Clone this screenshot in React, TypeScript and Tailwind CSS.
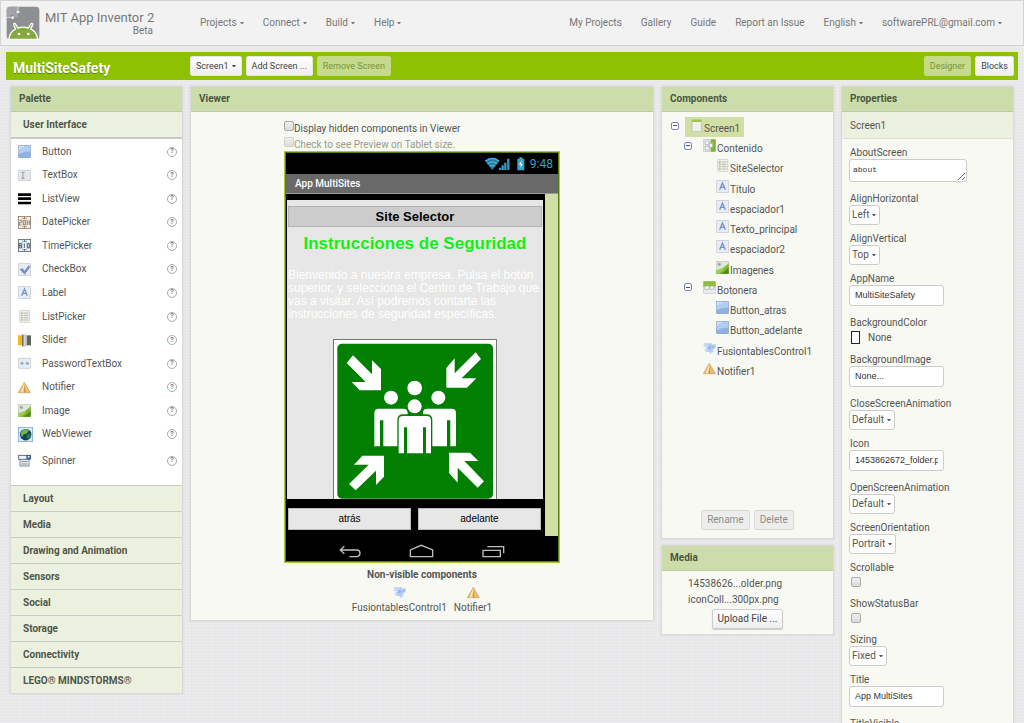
import type { ReactNode } from "react";

type IconName =
  | "button" | "textbox" | "listview" | "date" | "time" | "checkbox" | "label" | "listpicker"
  | "slider" | "password" | "notifier" | "image" | "web" | "spinner" | "screen" | "vertical"
  | "horizontal" | "fusion";

const frame = <rect x="1" y="1" width="37" height="37" rx="3" fill="#e9edf3" stroke="#b9bec8" strokeWidth="2" />;

const drawings: Record<IconName, ReactNode> = {
  button: (
    <>
      <rect x="1" y="1" width="37" height="37" rx="3" fill="#8fb2e2" stroke="#8599bd" strokeWidth="2" />
      <path d="M2 2h35v18Q20 18 2 28Z" fill="#b4cdf0" />
      <path d="M5 5h12M5 5v7" stroke="#e3eefc" strokeWidth="3" />
    </>
  ),
  textbox: (
    <>
      <rect x="1" y="4" width="37" height="31" rx="3" fill="#e4e6ea" stroke="#bfc3ca" strokeWidth="2" />
      <path d="M10 10h10M15 10v18M10 28h10" stroke="#8e929a" strokeWidth="2.5" fill="none" />
    </>
  ),
  listview: <path d="M0 4h39v8H0zM0 16h39v8H0zM0 29h39v8H0z" fill="#000" />,
  date: (
    <>
      <rect x="1" y="1" width="37" height="37" fill="#f6efe6" stroke="#8b8377" strokeWidth="3" />
      <path d="M13 1v37M26 1v37" stroke="#a59e92" strokeWidth="1.5" />
      <path d="M15 9l4.500-7 4.500 7zM15 30l4.500 7 4.500-7z" fill="#c86f28" />
      <path d="M4 13h6v7H4v7h6M17 13v14h5V13zM29 13v14M34 13v14" stroke="#7d7368" strokeWidth="2.500" fill="none" />
    </>
  ),
  time: (
    <>
      <rect x="1" y="1" width="37" height="37" fill="#f1f5f8" stroke="#5d6872" strokeWidth="3" />
      <path d="M13 1v37M26 1v37" stroke="#8d979f" strokeWidth="1.5" />
      <path d="M15 9l4.500-7 4.500 7zM15 30l4.500 7 4.500-7z" fill="#3b7ca5" />
      <path d="M4 13h6v14H4zM4 20h6M19 13v14M29 13h5v14h-5z" stroke="#3c4650" strokeWidth="2.500" fill="none" />
    </>
  ),
  checkbox: (
    <>
      {frame}
      <path d="M5 19l9-3 5 8 13-17 5 4-17 24Z" fill="#6d8fc4" />
    </>
  ),
  label: (
    <>
      {frame}
      <path d="M11 29l8.500-20L28 29M14.500 22h10" stroke="#6f95cf" strokeWidth="4" fill="none" />
    </>
  ),
  listpicker: (
    <>
      <rect x="5" y="1" width="30" height="37" rx="3" fill="#eef0ea" stroke="#c1c4bd" strokeWidth="2" />
      <path d="M9 9h5M9 16h5M9 23h5M9 30h5" stroke="#a5b86c" strokeWidth="4" />
      <path d="M17 9h14M17 16h14M17 23h14M17 30h14" stroke="#b5b9b9" strokeWidth="3" />
    </>
  ),
  slider: (
    <>
      <path d="M0 4h13v30H0z" fill="#f2b818" />
      <path d="M26 4h13v30H26z" fill="#5f6060" />
      <path d="M12 2h14v35H12z" fill="#b9b9b9" />
      <path d="M12 2h4v35h-4z" fill="#707070" />
      <path d="M19 2h3v35h-3z" fill="#e2e2e2" />
    </>
  ),
  password: (
    <>
      <rect x="1" y="4" width="37" height="30" rx="3" fill="#e8edf3" stroke="#b9bec8" strokeWidth="2" />
      <path d="M7 19h10M12 14v10M23 19h10M28 14v10M8.500 15.500l7 7M15.500 15.500l-7 7M24.500 15.500l7 7M31.500 15.500l-7 7" stroke="#7d97bb" strokeWidth="2" />
    </>
  ),
  notifier: (
    <>
      <path d="M19 4L37 35H1Z" fill="#eebd6b" stroke="#c99a5a" strokeWidth="2" strokeLinejoin="round" />
      <path d="M19 5L8 34h9Z" fill="#fbe4b6" />
      <path d="M19 12l2 22h-4z" fill="#b78443" />
    </>
  ),
  image: (
    <>
      <rect x="1" y="1" width="37" height="37" rx="2" fill="#dfe6da" stroke="#b3bcaa" strokeWidth="2" />
      <circle cx="10" cy="10" r="5" fill="#a4aa9f" />
      <path d="M1 28Q20 26 38 7v31H1Z" fill="#7db52d" />
      <path d="M1 38V28Q14 27 24 20q-3 14-23 18Z" fill="#a2cf52" />
      <path d="M14 38q17-7 24-20v20Z" fill="#4d8a1d" />
    </>
  ),
  web: (
    <>
      <rect x="1" y="1" width="37" height="37" fill="#dbe9fb" stroke="#7aa6dd" strokeWidth="2" />
      <circle cx="20" cy="20" r="15" fill="#17415c" />
      <path d="M8 13Q14 4 22 6l6 4-5 7-8 2-4 7q-6-5-3-13Z" fill="#6cb944" />
      <path d="M23 20l10-3q3 9-6 15-7-4-4-12Z" fill="#287f43" />
    </>
  ),
  spinner: (
    <>
      <rect x="2" y="4" width="33" height="12" fill="#eef1f5" stroke="#47566c" strokeWidth="2.500" />
      <path d="M25 3h14v13H25z" fill="#3b5d94" />
      <path d="M28 7h8l-4 6z" fill="#fff" />
      <rect x="6" y="17" width="27" height="19" fill="#f7f8fa" stroke="#667285" strokeWidth="2.500" />
      <path d="M10 23h19M10 30h19" stroke="#667285" strokeWidth="2.500" />
    </>
  ),
  screen: (
    <>
      <rect x="6" y="1" width="28" height="37" rx="3" fill="#f0f1ec" stroke="#b4b8ab" strokeWidth="2" />
      <path d="M6 2h28v7H6z" fill="#9dc24e" />
    </>
  ),
  vertical: (
    <>
      {frame}
      <path d="M23 1h12q3 0 3 3v31q0 3-3 3H23Z" fill="#86b534" />
      <path d="M6 6h13v11H6zM6 22h13v11H6zM18 13h11v12H18z" fill="#f5f5f3" stroke="#a7aba3" strokeWidth="2" />
    </>
  ),
  horizontal: (
    <>
      {frame}
      <path d="M1 17V4q0-3 3-3h31q3 0 3 3v13H1Z" fill="#8dbb3d" />
      <path d="M6 15h12v10H6zM21 15h12v10H21z" fill="#f8f8f6" stroke="#a7aba3" strokeWidth="2" />
    </>
  ),
  fusion: (
    <>
      <path d="M2 3h16v12H2zM8 16h14v13H8z" fill="#c9daf4" />
      <path d="M14 7l11-4 3 5 10-2v12l-8 4 1 7-9 6-5-7-8 2-2-8 8-6z" fill="#b3ccf1" />
      <path d="M18 12l7 3-3 7-7-2zM28 12l7 1-5 6z" fill="#8fb1e6" />
      <path d="M3 22h7v6H3zM24 29h7v6h-7z" fill="#dde8f8" />
    </>
  ),
};

function Icon({ name, big = false }: { name: IconName; big?: boolean }) {
  return (
    <svg viewBox="0 0 39 39" className={big ? "h-[15px] w-[15px] shrink-0" : "h-[13px] w-[13px] shrink-0"} aria-hidden="true">
      {drawings[name]}
    </svg>
  );
}

function Caret() {
  return (
    <svg viewBox="0 0 4 2" className="h-[2px] w-[4px] shrink-0" aria-hidden="true">
      <path d="M0 0h4L2.500 2h-1Z" fill="currentColor" />
    </svg>
  );
}

function MenuButton({ children }: { children: ReactNode }) {
  return (
    <button type="button" className="flex items-center gap-[3px] whitespace-nowrap">
      {children}
      <Caret />
    </button>
  );
}

function Logo() {
  return (
    <svg viewBox="18 18 102 102" className="h-[34px] w-[34px] shrink-0" aria-hidden="true">
      <rect x="20" y="20" width="98" height="98" rx="10" fill="#8d8f92" />
      <path d="M20 50V30q0-10 10-10h24v12h-8v8h8v12H40v-8h-8v8Z" fill="#a3a5a8" />
      <path d="M54 20v16M40 53H20M54 36h8" stroke="#f3f3f3" strokeWidth="2" fill="none" />
      <circle cx="53" cy="36" r="4" fill="#f3f3f3" />
      <circle cx="38" cy="53" r="4" fill="#f3f3f3" />
      <path d="M27 118q1-22 20-31l-6-12q-1-5 4-5l9 14q15-5 31 0l9-14q6 0 4 5l-6 12q19 9 21 31Z" fill="#84a93f" stroke="#fff" strokeWidth="4" strokeLinejoin="round" />
      <circle cx="57" cy="102" r="4" fill="#fff" />
      <circle cx="85" cy="102" r="4" fill="#fff" />
    </svg>
  );
}

function Panel({ title, className, children }: { title: string; className: string; children: ReactNode }) {
  return (
    <section className={`border border-[#d9dad7] bg-[#f7f9f2] shadow-[0_0_2px_#cfcfcf] ${className}`}>
      <h2 className="flex h-[25px] items-center border-b border-[#bccba3] bg-[#ccddab] pl-2 font-bold text-[#4b5641]">{title}</h2>
      {children}
    </section>
  );
}

const paletteItems: [string, IconName][] = [
  ["Button", "button"], ["TextBox", "textbox"], ["ListView", "listview"], ["DatePicker", "date"],
  ["TimePicker", "time"], ["CheckBox", "checkbox"], ["Label", "label"], ["ListPicker", "listpicker"],
  ["Slider", "slider"], ["PasswordTextBox", "password"], ["Notifier", "notifier"], ["Image", "image"],
  ["WebViewer", "web"],
];

const categories = ["Layout", "Media", "Drawing and Animation", "Sensors", "Social", "Storage", "Connectivity", "LEGO® MINDSTORMS®"];

function PaletteItem({ name, icon }: { name: string; icon: IconName }) {
  return (
    <li className="flex items-center pr-[5px] pl-[7px]">
      <span className="flex w-6 items-center">
        <Icon name={icon} big={icon === "web"} />
      </span>
      <span className="grow">{name}</span>
      <button type="button" aria-label={`Help for ${name}`} className="flex h-[10px] w-[10px] items-center justify-center rounded-full border border-[#aaa] text-[7px] leading-none font-bold text-[#777]">
        ?
      </button>
    </li>
  );
}

function Palette() {
  return (
    <Panel title="Palette" className="w-[173px] shrink-0">
      <button type="button" className="flex h-[27px] w-full items-center border-b-2 border-[#c9cbc8] bg-[#ecf1df] pt-px pl-3 font-bold text-[#4f564a]">
        User Interface
      </button>
      <div className="bg-white pt-px pb-[10px]">
        <ul className="grid h-[306px] auto-rows-fr">
          {paletteItems.map(([name, icon]) => (
            <PaletteItem key={name} name={name} icon={icon} />
          ))}
        </ul>
        <ul className="grid h-[29px] content-center">
          <PaletteItem name="Spinner" icon="spinner" />
        </ul>
      </div>
      {categories.map((c) => (
        <button key={c} type="button" className="flex h-[26px] w-full items-center border-t border-[#c9ccc4] bg-[#ecf1df] pl-3 font-bold text-[#4f564a]">
          {c}
        </button>
      ))}
    </Panel>
  );
}

function Check({ id, disabled = false }: { id: string; disabled?: boolean }) {
  return (
    <input
      id={id}
      type="checkbox"
      disabled={disabled}
      className="h-[10px] w-[10px] shrink-0 appearance-none rounded-[2px] border border-[#a9a9a9] bg-linear-to-b from-[#efefef] to-[#dcdcdc] disabled:border-[#cfcfcf]"
    />
  );
}

function StatusIcons() {
  return (
    <svg viewBox="624 136 126 42" className="h-[14px] w-[42px]" aria-hidden="true" fill="none" stroke="#3497bd">
      <path d="M626 147Q649 129 671 147L649 175Z" fill="#2b7d9f" stroke="none" />
      <path d="M629 148Q649 132 669 148M635 156Q649 145 663 156M641 164Q649 158 657 164" strokeWidth="4" stroke="#4bb0d6" />
      <path d="M672 175v-7M680 175v-14M688 175v-22M697 175v-34" strokeWidth="7" />
      <path d="M724 141h6v-4h9v4h6v35h-21z" fill="#3aa0c6" stroke="none" />
      <path d="M737 146l-8 13h6l-3 11 9-14h-6z" fill="#fff" stroke="none" />
    </svg>
  );
}

function AssemblySign() {
  return (
    <svg viewBox="174 28 492 480" className="mx-auto h-[160px] w-[164px]" role="img" aria-label="Assembly point">
      <rect x="175.500" y="29.500" width="489" height="490" fill="#fff" stroke="#777" strokeWidth="3" />
      <rect x="187" y="42" width="467" height="465" rx="14" fill="#007f00" />
      <g fill="#fff">
        <path d="M234 77l57 57V92l27 26v64h-64l-24-25h42l-57-57z" />
        <path d="M602 68l-63 63V86l-25 29v59h62l28-28h-44l58-58z" />
        <path d="M242 482l61-59v43l24-25v-63h-65l-25 27h44l-59 58z" />
        <path d="M608 474l-60-60v45l-26-29v-61h63l25 25h-42l59 61z" />
        <circle cx="419" cy="175" r="22" />
        <circle cx="348" cy="204" r="21" />
        <circle cx="490" cy="204" r="21" />
        <path d="M298 250q0-13 13-13h74q13 0 13 13v100h-73v-78h-10v78h-17z" />
        <path d="M444 250q0-13 13-13h73q13 0 13 13v100h-17v-78h-10v78h-72z" />
      </g>
      <circle cx="419" cy="230" r="24" fill="#007f00" />
      <circle cx="419" cy="230" r="21" fill="#fff" />
      <path d="M367 375V271q0-17 17-17h71q17 0 17 17v104z" fill="#007f00" />
      <path d="M371 371V272q0-13 13-13h71q13 0 13 13v99h-15v-78h-9v78h-48v-78h-9v78z" fill="#fff" />
    </svg>
  );
}

function Phone() {
  return (
    <div className="w-[276px] border border-[#aacb2b] font-['Liberation_Sans',sans-serif]">
      <div className="border border-[#5b7a0c] bg-black">
        <div className="flex h-[21px] items-center justify-end gap-[4px] pr-[5px] font-['Roboto',sans-serif] text-[12px] text-[#3aa0c6]">
          <StatusIcons />
          9:48
        </div>
        <div className="flex h-5 items-center border-b border-[#9a9a9a] bg-[#696969] pl-[9px] font-['Roboto',sans-serif] font-medium text-white">
          App MultiSites
        </div>
        <div className="flex bg-[#d2dfa4]">
          <div className="w-[259px] bg-black px-px pt-[6px] pb-[6px]">
            <div className="mr-px h-[299px] overflow-hidden bg-[#e7e7e7] px-px pt-[6px]">
              <button type="button" className="block h-[21px] w-full border border-[#b3b3b3] bg-[#ccc] text-[13px] leading-4 font-bold text-black">
                Site Selector
              </button>
              <h3 className="mt-[7px] text-center text-[17px] leading-[20px] font-bold text-[#12f012]">Instrucciones de Seguridad</h3>
              <p className="mt-[15px] h-[70px] text-[12px] leading-[13px] text-white">
                Bienvenido a nuestra empresa. Pulsa el botón superior, y selecciona el Centro de Trabajo que vas a visitar. Así podremos contarte las instrucciones de seguridad específicas.
              </p>
              <AssemblySign />
            </div>
            <div className="flex gap-[7px] pt-[9px] pr-[3px] pl-px">
              <button type="button" className="h-[22px] flex-1 border border-[#bbb] bg-[#e7e7e7] text-black">atrás</button>
              <button type="button" className="h-[22px] flex-1 border border-[#bbb] bg-[#e7e7e7] text-black">adelante</button>
            </div>
          </div>
        </div>
        <div className="flex h-[25px] items-center justify-center gap-12 pt-1">
          <svg viewBox="194 640 66 42" className="h-[14px] w-[22px]" fill="none" stroke="#bdbdbd" strokeWidth="4" aria-hidden="true">
            <path d="M210 647l-12 11 12 11M199 658h50q8 1 8 10t-9 10h-23" />
          </svg>
          <svg viewBox="405 640 75 42" className="h-[14px] w-[25px]" fill="none" stroke="#bdbdbd" strokeWidth="4" aria-hidden="true">
            <path d="M409 678v-20l33-14 34 14v20z" />
          </svg>
          <svg viewBox="624 640 69 42" className="h-[14px] w-[23px]" fill="none" stroke="#bdbdbd" strokeWidth="4" aria-hidden="true">
            <path d="M627 659h52v19h-52zM640 648h49v20" />
          </svg>
        </div>
      </div>
    </div>
  );
}

function Viewer() {
  return (
    <Panel title="Viewer" className="min-w-[300px] grow">
      <div className="flex flex-col items-center pt-[9px] pb-[6px]">
        <div>
          <div className="flex h-4">
            <Check id="hidden-components" />
            <label htmlFor="hidden-components" className="pt-[2px]">Display hidden components in Viewer</label>
          </div>
          <div className="flex h-[14px]">
            <Check id="tablet-preview" disabled />
            <label htmlFor="tablet-preview" className="pt-[2px] text-[#999]">Check to see Preview on Tablet size.</label>
          </div>
          <Phone />
        </div>
        <h3 className="mt-[6px] font-bold">Non-visible components</h3>
        <div className="mt-[5px] flex gap-[7px]">
          <div className="flex flex-col items-center gap-[3px]">
            <Icon name="fusion" />
            FusiontablesControl1
          </div>
          <div className="flex flex-col items-center gap-[3px]">
            <Icon name="notifier" />
            Notifier1
          </div>
        </div>
      </div>
    </Panel>
  );
}

const tree: { name: string; icon: IconName; depth: 0 | 1 | 2; open?: boolean }[] = [
  { name: "Screen1", icon: "screen", depth: 0, open: true },
  { name: "Contenido", icon: "vertical", depth: 1, open: true },
  { name: "SiteSelector", icon: "listpicker", depth: 2 },
  { name: "Titulo", icon: "label", depth: 2 },
  { name: "espaciador1", icon: "label", depth: 2 },
  { name: "Texto_principal", icon: "label", depth: 2 },
  { name: "espaciador2", icon: "label", depth: 2 },
  { name: "Imagenes", icon: "image", depth: 2 },
  { name: "Botonera", icon: "horizontal", depth: 1, open: true },
  { name: "Button_atras", icon: "button", depth: 2 },
  { name: "Button_adelante", icon: "button", depth: 2 },
  { name: "FusiontablesControl1", icon: "fusion", depth: 1 },
  { name: "Notifier1", icon: "notifier", depth: 1 },
];

const indents = ["pl-[9px]", "pl-[22px]", "pl-[35px]"];

function Tree() {
  return (
    <ul className="mt-[5px] grid h-[263px] auto-rows-fr">
      {tree.map((n) => (
        <li key={n.name} className={`flex items-center ${indents[n.depth]}`}>
          <span className="flex w-[14px] shrink-0 pb-[3px]">
            {n.open && (
              <button type="button" aria-label={`Collapse ${n.name}`} className="flex h-2 w-2 items-center justify-center rounded-[2px] border border-[#7b83c4] bg-white">
                <span className="h-px w-1 bg-[#3d48a8]" />
              </button>
            )}
          </span>
          <span className={n.depth === 0 ? "flex h-full items-start bg-[#d2dfa4] pt-[2px] pr-1 pl-[5px]" : "flex h-full items-start pt-[2px] pl-[5px]"}>
            <Icon name={n.icon} />
            <span className="pt-1 pl-px">{n.name}</span>
          </span>
        </li>
      ))}
    </ul>
  );
}

const buttonBase = "h-5 rounded-[2px] border px-[5px] whitespace-nowrap";

function Components() {
  return (
    <div className="flex w-[173px] shrink-0 flex-col gap-[6px]">
      <Panel title="Components" className="h-[453px]">
        <div className="flex h-[426px] flex-col justify-between pb-2">
          <Tree />
          <div className="flex justify-center gap-1">
            <button type="button" disabled className={`${buttonBase} border-[#d9d9d9] bg-[#ededeb] text-[#8d8d8d]`}>Rename</button>
            <button type="button" disabled className={`${buttonBase} border-[#d9d9d9] bg-[#ededeb] text-[#8d8d8d]`}>Delete</button>
          </div>
        </div>
      </Panel>
      <Panel title="Media" className="">
        <ul className="pt-[5px] pl-[26px] leading-4">
          <li>14538626...older.png</li>
          <li>iconColl...300px.png</li>
        </ul>
        <div className="flex justify-center pt-px pb-[5px]">
          <button type="button" className={`${buttonBase} border-[#ccc] bg-linear-to-b from-white to-[#eee] text-[#444] shadow-[0_1px_1px_#ccc]`}>
            Upload File ...
          </button>
        </div>
      </Panel>
    </div>
  );
}

function Field({ label, className, children }: { label: string; className: string; children: ReactNode }) {
  return (
    <div className={`flex flex-col items-start ${className}`}>
      <label htmlFor={label} className="pl-px leading-[13px]">{label}</label>
      {children}
    </div>
  );
}

function SelectField({ label, value }: { label: string; value: string }) {
  return (
    <Field label={label} className="h-10">
      <div className="flex h-5 items-center rounded-[3px] border border-[#ccc] bg-white pr-[3px] pl-[2px]">
        <select id={label} defaultValue={value} className="field-sizing-content appearance-none pr-[3px] leading-3 outline-none">
          <option>{value}</option>
        </select>
        <Caret />
      </div>
    </Field>
  );
}

function TextField({ label, value }: { label: string; value: string }) {
  return (
    <Field label={label} className="h-[44px]">
      <input
        id={label}
        type="text"
        defaultValue={value}
        className="h-[21px] w-[95px] rounded-[3px] border border-[#ccc] bg-white px-[5px] pb-px font-['Liberation_Sans',sans-serif] text-[9px] text-[#333]"
      />
    </Field>
  );
}

function CheckField({ label }: { label: string }) {
  return (
    <Field label={label} className="h-9">
      <span className="flex pt-[3px] pl-[2px]">
        <Check id={label} />
      </span>
    </Field>
  );
}

function Properties() {
  return (
    <Panel title="Properties" className="w-[173px] shrink-0">
      <div className="flex h-[27px] items-center border-b border-[#dde1d3] bg-[#ecf1df] pt-px pl-2">Screen1</div>
      <form className="pt-[7px] pl-[7px]">
        <Field label="AboutScreen" className="h-[46px]">
          <textarea
            id="AboutScreen"
            defaultValue="about"
            className="h-[23px] w-[118px] rounded-[3px] border border-[#ccc] bg-white px-[3px] pt-[4px] font-['Liberation_Mono',monospace] text-[8px] leading-3 text-[#333]"
          />
        </Field>
        <SelectField label="AlignHorizontal" value="Left" />
        <SelectField label="AlignVertical" value="Top" />
        <TextField label="AppName" value="MultiSiteSafety" />
        <Field label="BackgroundColor" className="h-[37px]">
          <button id="BackgroundColor" type="button" className="flex items-center gap-2 pt-[2px] pl-[2px]">
            <span className="h-[13px] w-[9px] border border-[#222] bg-white" />
            None
          </button>
        </Field>
        <TextField label="BackgroundImage" value="None..." />
        <SelectField label="CloseScreenAnimation" value="Default" />
        <TextField label="Icon" value="1453862672_folder.p" />
        <SelectField label="OpenScreenAnimation" value="Default" />
        <SelectField label="ScreenOrientation" value="Portrait" />
        <CheckField label="Scrollable" />
        <CheckField label="ShowStatusBar" />
        <SelectField label="Sizing" value="Fixed" />
        <TextField label="Title" value="App MultiSites" />
        <CheckField label="TitleVisible" />
      </form>
    </Panel>
  );
}

const toolBase = "h-5 rounded-[2px] border px-[5px] text-[9px] whitespace-nowrap";
const toolLight = "border-[#e5e5e5] bg-linear-to-b from-white to-[#eee] text-[#444]";
const toolOff = "border-[#c3db80] bg-[#c5da8a] text-[#7b9540]";

export default function App() {
  return (
    <div className="h-screen overflow-hidden bg-[#e7e7e9] bg-[repeating-linear-gradient(0deg,#ffffff28_0_1px,transparent_1px_3px),repeating-linear-gradient(90deg,#ffffff28_0_1px,transparent_1px_3px)] font-['Roboto',sans-serif] text-[10px] leading-3 text-[#555]">
      <header className="flex h-[46px] items-center border border-[#d4d4d4] bg-[#f2f2f2] pr-[21px] pl-[5px] text-[#777]">
        <Logo />
        <div className="ml-[5px] w-[108px] shrink-0 text-right">
          <h1 className="text-[13px] leading-4 whitespace-nowrap">MIT App Inventor 2</h1>
          <div className="leading-[10px]">Beta</div>
        </div>
        <nav className="ml-[47px] flex grow gap-[19px]">
          <MenuButton>Projects</MenuButton>
          <MenuButton>Connect</MenuButton>
          <MenuButton>Build</MenuButton>
          <MenuButton>Help</MenuButton>
        </nav>
        <nav className="flex shrink-0 gap-[19px]">
          <a href="#projects">My Projects</a>
          <a href="#gallery">Gallery</a>
          <a href="#guide">Guide</a>
          <a href="#issue">Report an Issue</a>
          <MenuButton>English</MenuButton>
          <MenuButton>softwarePRL@gmail.com</MenuButton>
        </nav>
      </header>
      <div className="mx-[6px] mt-[6px] flex h-7 items-center gap-1 bg-[#8ec102] pr-1 pl-[7px]">
        <h2 className="w-[173px] pt-1 text-[14px] leading-4 font-bold text-white [text-shadow:0_1px_1px_#5d8000]">MultiSiteSafety</h2>
        <button type="button" className={`${toolBase} ${toolLight} flex items-center gap-[3px]`}>
          Screen1
          <Caret />
        </button>
        <button type="button" className={`${toolBase} ${toolLight}`}>Add Screen ...</button>
        <button type="button" disabled className={`${toolBase} ${toolOff}`}>Remove Screen</button>
        <div className="grow" />
        <button type="button" disabled className={`${toolBase} ${toolOff}`}>Designer</button>
        <button type="button" className={`${toolBase} ${toolLight}`}>Blocks</button>
      </div>
      <main className="mt-[6px] flex items-start gap-[7px] px-[10px]">
        <Palette />
        <Viewer />
        <Components />
        <Properties />
      </main>
    </div>
  );
}
